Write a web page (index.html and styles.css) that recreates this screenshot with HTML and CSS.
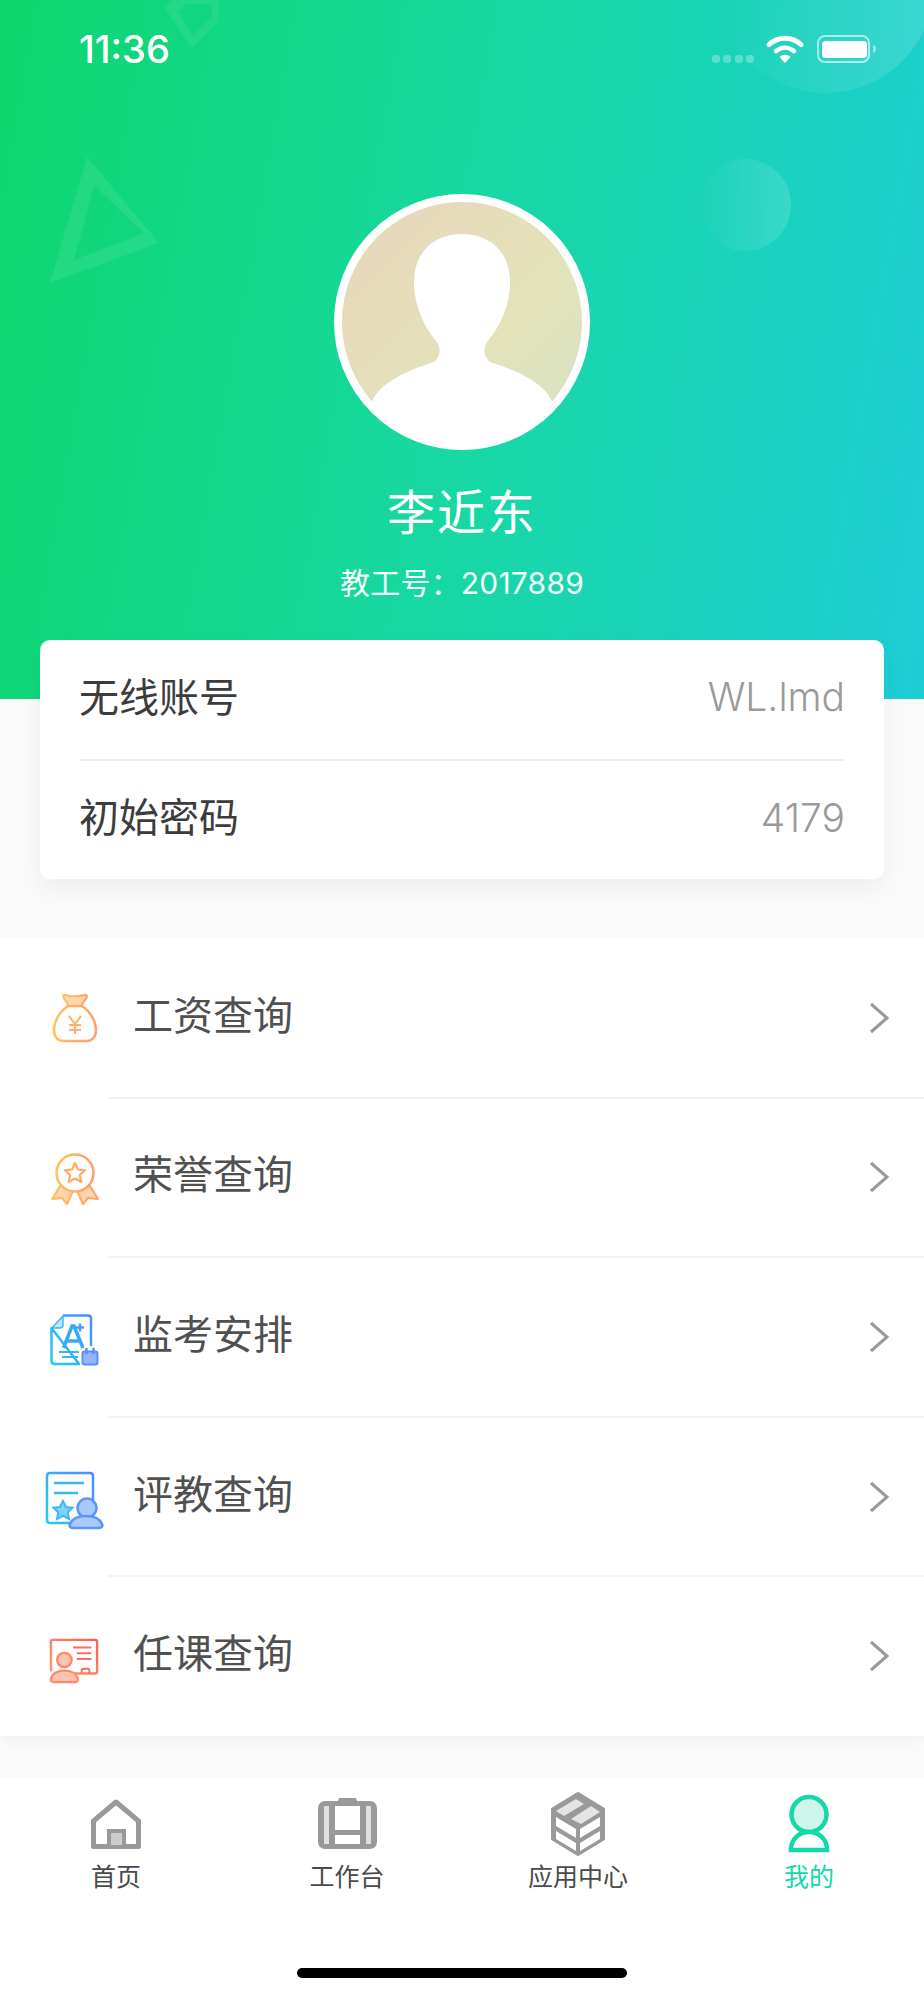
FILE: index.html
```html
<!DOCTYPE html>
<html lang="zh">
<head>
<meta charset="utf-8">
<title>我的</title>
<link rel="stylesheet" href="styles.css">
</head>
<body>
<svg class="defs" width="0" height="0" aria-hidden="true">
  <defs>
    <linearGradient id="org" x1="0" y1="0" x2="1" y2="0"><stop offset="0" stop-color="#ffc062"/><stop offset="1" stop-color="#ff9f6a"/></linearGradient>
    <linearGradient id="blu" x1="0" y1="1" x2="1" y2="0"><stop offset="0" stop-color="#22cdf0"/><stop offset="1" stop-color="#4e8cff"/></linearGradient>
    <linearGradient id="red" x1="0" y1="1" x2="1" y2="0"><stop offset="0" stop-color="#ffa061"/><stop offset="1" stop-color="#ff5a62"/></linearGradient>
    <linearGradient id="ava" x1="0" y1="0" x2="1" y2="1"><stop offset="0" stop-color="#e8d4bb"/><stop offset=".6" stop-color="#e3e3ba"/><stop offset="1" stop-color="#d5e2c4"/></linearGradient>
    <linearGradient id="fade" x1="0" y1="0" x2="1" y2="0"><stop offset="0" stop-color="#fff" stop-opacity="0"/><stop offset="1" stop-color="#fff" stop-opacity=".14"/></linearGradient>
  </defs>
</svg>
<div class="page">
  <header class="hero">
    <svg class="deco" viewBox="0 0 924 699" aria-hidden="true">
      <path fill-rule="evenodd" d="M165 8 172 0H218V22L192 48ZM178 12 193 36 212 17V4H185Z" fill="#fff" fill-opacity=".07"/>
      <path fill-rule="evenodd" d="M87 157 159 243 50 283ZM94 185 74 260 144 233Z" fill="#fff" fill-opacity=".08"/>
      <circle cx="745" cy="205" r="46" fill="url(#fade)"/>
      <circle cx="826" cy="-15" r="108" fill="url(#fade)"/>
    </svg>
    <div class="status">
      <span class="time">11:36</span>
      <div class="status-icons">
        <span class="signal"><i></i><i></i><i></i><i></i></span>
        <svg class="wifi" viewBox="0 0 38 28" aria-hidden="true">
          <path d="M3 9.500C12 1 26 1 35 9.500" fill="none" stroke="#fff" stroke-width="5" stroke-linecap="round"/>
          <path d="M10 16c5.500-4.500 12.500-4.500 18 0" fill="none" stroke="#fff" stroke-width="4.500" stroke-linecap="round"/>
          <path d="M19 28l-5.500-6c3-3 8-3 11 0z" fill="#fff"/>
        </svg>
        <svg class="battery" viewBox="0 0 60 28" aria-hidden="true">
          <rect x="1" y="1" width="51" height="26" rx="7" fill="none" stroke="#fff" stroke-opacity=".6" stroke-width="2"/>
          <rect x="5" y="6" width="45" height="17" rx="3.500" fill="#fff"/>
          <path d="M56 10c2 .5 3 2 3 4s-1 3.500-3 4z" fill="#fff" fill-opacity=".5"/>
        </svg>
      </div>
    </div>
    <div class="profile">
      <svg class="avatar" viewBox="0 0 256 256" aria-hidden="true">
        <circle cx="128" cy="128" r="124" fill="url(#ava)" stroke="#fff" stroke-width="8"/>
        <path d="M128 40C158 40 176 60 176 88 176 118 160 140 153 148 149 154 149 163 156 168 182 176 212 190 218 208A120 120 0 0 1 38 208C44 190 74 176 100 168 107 163 107 154 103 148 96 140 80 118 80 88 80 60 98 40 128 40Z" fill="#fff"/>
      </svg>
      <div class="name">李近东</div>
      <div class="staff-no">教工号：2017889</div>
    </div>
  </header>

  <section class="card">
    <div class="card-row"><span class="card-text">无线账号</span><span class="card-value">WL.lmd</span></div>
    <div class="card-row"><span class="card-text">初始密码</span><span class="card-value">4179</span></div>
  </section>

  <ul class="menu">
    <li class="menu-row">
      <span class="menu-icon">
        <svg class="mi mi-bag" viewBox="0 0 48 52" aria-hidden="true">
          <path d="M14 3c4 1 6 2 10 1 4 1 7-1 10-1 3 0 2 2 0 5-2 2-3 4-3 6H17c0-2-1-4-3-6-2-3-3-5 0-5z" fill="#ffd8ae" stroke="url(#org)" stroke-width="2"/>
          <path d="M17 14C8 20 3 30 3 38c0 7 4 11 10 11h22c6 0 10-4 10-11 0-8-5-18-14-24z" fill="none" stroke="url(#org)" stroke-width="2.500"/>
          <path d="M18 24l6 8 6-8M24 32v10M18 33h12M18 38h12" fill="none" stroke="#ffb066" stroke-width="2"/>
        </svg>
      </span>
      <span class="menu-label">工资查询</span>
      <svg class="chev" viewBox="0 0 22 32" aria-hidden="true"><path d="M3 2l16 14L3 30" fill="none" stroke="#999" stroke-width="3"/></svg>
    </li>
    <li class="menu-row">
      <span class="menu-icon">
        <svg class="mi mi-rosette" viewBox="0 0 48 52" aria-hidden="true">
          <path d="M9 33L1 46l10-1 5 6 6-13zM39 33l8 13-10-1-5 6-6-13z" fill="#ffd3ad" stroke="url(#org)" stroke-width="2" stroke-linejoin="round"/>
          <circle cx="24" cy="20" r="18.500" fill="#fff" stroke="url(#org)" stroke-width="2.500"/>
          <path d="M24 10l3 6.500 7 .8-5.200 4.700 1.500 7L24 25.500 17.700 29l1.500-7-5.200-4.700 7-.8z" fill="none" stroke="#ffab66" stroke-width="2.200" stroke-linejoin="round"/>
        </svg>
      </span>
      <span class="menu-label">荣誉查询</span>
      <svg class="chev" viewBox="0 0 22 32" aria-hidden="true"><path d="M3 2l16 14L3 30" fill="none" stroke="#999" stroke-width="3"/></svg>
    </li>
    <li class="menu-row">
      <span class="menu-icon">
        <svg class="mi mi-doc" viewBox="0 0 48 52" aria-hidden="true">
          <path d="M13 2.500H38c2 0 3 1 3 3V33M29 51H5c-2 0-3.500-1-3.500-3V15Z" fill="none" stroke="url(#blu)" stroke-width="2.500" stroke-linejoin="round"/>
          <path d="M13 3v9c0 2-1 3-3 3H2z" fill="#bde9f8" stroke="#3db8f2" stroke-width="1.500"/>
          <path d="M13.500 35L22 13h2L33 35M16.500 28h14" fill="none" stroke="#3ba8f5" stroke-width="3.500"/>
          <path d="M26 14.500h8M30 10.500v8" stroke="#4aa0f8" stroke-width="2.500"/>
          <path d="M9 39h20M12 44h16" stroke="#37b4f3" stroke-width="2"/>
          <rect x="32.500" y="38.500" width="15" height="13" rx="2" fill="#93b6fb" stroke="#5b8ff9" stroke-width="2"/>
          <path d="M36.500 35v6M43.500 35v6" stroke="#5b8ff9" stroke-width="2.500"/>
        </svg>
      </span>
      <span class="menu-label">监考安排</span>
      <svg class="chev" viewBox="0 0 22 32" aria-hidden="true"><path d="M3 2l16 14L3 30" fill="none" stroke="#999" stroke-width="3"/></svg>
    </li>
    <li class="menu-row">
      <span class="menu-icon">
        <svg class="mi mi-wide" viewBox="0 0 56 58" aria-hidden="true">
          <path d="M24 51H4c-2 0-3-1-3-3V4c0-2 1-3 3-3h40c2 0 3 1 3 3v24" fill="none" stroke="url(#blu)" stroke-width="2.500"/>
          <path d="M8 11h30M8 21h24" stroke="#36b6f2" stroke-width="2.500"/>
          <path d="M17 29l3 6 6.500.8-4.700 4.500 1.200 6.700-6-3.200-6 3.200 1.200-6.700-4.700-4.500 6.500-.8z" fill="#7fd3f8" stroke="#3fb6f3" stroke-width="2"/>
          <circle cx="41" cy="36" r="9.500" fill="#a9c8fc" stroke="#5b95f8" stroke-width="2.500"/>
          <path d="M28 56c-3 0-4-2-3-4 2-5 8-8 16-8s14 3 16 8c1 2 0 4-3 4z" transform="translate(-1 0)" fill="#a9c8fc" stroke="#5b95f8" stroke-width="2.500"/>
        </svg>
      </span>
      <span class="menu-label">评教查询</span>
      <svg class="chev" viewBox="0 0 22 32" aria-hidden="true"><path d="M3 2l16 14L3 30" fill="none" stroke="#999" stroke-width="3"/></svg>
    </li>
    <li class="menu-row">
      <span class="menu-icon">
        <svg class="mi mi-slide" viewBox="0 0 52 46" aria-hidden="true">
          <path d="M2 34V3c0-1 .6-2 2-2h44c1.400 0 2 1 2 2v31c0 1-.6 2-2 2H20" fill="none" stroke="url(#red)" stroke-width="2.500"/>
          <path d="M25 9h19M29 15h15M29 21h15" stroke="#ff6a66" stroke-width="2"/>
          <path d="M34 36v-3c0-1 1-2 2-2h4c1 0 2 1 2 2v3" fill="none" stroke="#ff6a66" stroke-width="2"/>
          <circle cx="16" cy="22" r="7.500" fill="#ffc2ac" stroke="#ff8a6c" stroke-width="2.500"/>
          <path d="M5 45c-2 0-3-1-3-3 1-6 7-9 14-9s13 3 14 9c0 2-1 3-3 3z" fill="#ffc2ac" stroke="#ff8a6c" stroke-width="2.500"/>
        </svg>
      </span>
      <span class="menu-label">任课查询</span>
      <svg class="chev" viewBox="0 0 22 32" aria-hidden="true"><path d="M3 2l16 14L3 30" fill="none" stroke="#999" stroke-width="3"/></svg>
    </li>
  </ul>

  <nav class="tabbar">
    <div class="tab">
      <span class="tab-icon">
        <svg class="ti-home" viewBox="0 0 50 50" aria-hidden="true">
          <path d="M25 3L2.500 22V47.500H47.500V22Z" fill="none" stroke="#999" stroke-width="5" stroke-linejoin="round"/>
          <rect x="18" y="32" width="15" height="16" fill="#ccc" stroke="#999" stroke-width="4"/>
        </svg>
      </span>
      <span class="tab-label">首页</span>
    </div>
    <div class="tab">
      <span class="tab-icon">
        <svg class="ti-work" viewBox="0 0 59 51" aria-hidden="true">
          <path d="M20 3l1-3h17l1 3z" fill="#999"/>
          <rect x="0" y="3" width="59" height="48" rx="7" fill="#999"/>
          <path d="M6 8h5v38H6zM48 8h5v38h-5z" fill="#e0e0e0"/>
          <path d="M17 8h25v24H17zM17 37h25v9H17z" fill="#fff"/>
        </svg>
      </span>
      <span class="tab-label">工作台</span>
    </div>
    <div class="tab">
      <span class="tab-icon">
        <svg class="ti-box" viewBox="0 0 54 64" aria-hidden="true">
          <path d="M27 1.500L52.500 17V47L27 62.500 1.500 47V17Z" fill="#999" stroke="#999" stroke-width="3" stroke-linejoin="round"/>
          <path d="M5 19L25 7 33 12 13 24ZM20 27L40 14 49 20 30 32Z" fill="#e4e4e4"/>
          <path d="M5 25L25 37V46L5 34ZM5 39L25 51V59L5 47ZM49 25L29 37V46L49 34ZM49 39L29 51V59L49 47Z" fill="#fff"/>
        </svg>
      </span>
      <span class="tab-label">应用中心</span>
    </div>
    <div class="tab tab-active">
      <span class="tab-icon">
        <svg class="ti-me" viewBox="0 0 40 57" aria-hidden="true">
          <circle cx="20" cy="19.500" r="17.500" fill="#cff4ea" stroke="#14d8a8" stroke-width="4.500"/>
          <path d="M2 55c0-11 8-18 18-18s18 7 18 18z" fill="#fff" stroke="#14d8a8" stroke-width="4.500"/>
        </svg>
      </span>
      <span class="tab-label">我的</span>
    </div>
  </nav>
  <div class="home-indicator"></div>
</div>
</body>
</html>
```

FILE: styles.css
```css
* { box-sizing: border-box; }
html, body { margin: 0; padding: 0; }
body {
  width: 924px;
  height: 2000px;
  overflow: hidden;
  background: #fafafa;
  font-family: "Inter", "Noto Sans CJK SC", "Noto Sans", sans-serif;
}
.defs { position: absolute; }
.page { width: 924px; height: 2000px; display: flex; flex-direction: column; }

.hero {
  position: relative;
  height: 699px;
  flex: none;
  background: linear-gradient(100deg, #0ed66c 0%, #17d8a2 50%, #1dcdd6 100%);
  overflow: hidden;
}
.deco { position: absolute; left: 0; top: 0; width: 924px; height: 699px; }
.status {
  position: relative;
  height: 100px;
  padding: 29px 47px 0 79px;
  display: flex;
  justify-content: space-between;
  align-items: flex-start;
  color: #fff;
}
.time { font-size: 38px; font-weight: 500; line-height: 40px; }
.status-icons { display: flex; align-items: flex-start; gap: 13px; padding-top: 6px; }
.signal { display: flex; gap: 3.300px; margin-top: 20px; margin-right: -1px; }
.signal i { width: 8px; height: 8px; border-radius: 3px; background: rgba(255,255,255,.28); display: block; }
.wifi { width: 38px; height: 28px; }
.battery { width: 60px; height: 28px; }

.profile { position: relative; display: flex; flex-direction: column; align-items: center; padding-top: 94px; color: #fff; }
.avatar { width: 256px; height: 256px; display: block; }
.name { margin-top: 31px; font-size: 48px; line-height: 64px; letter-spacing: 2px; }
.staff-no { margin-top: 18px; font-size: 30px; line-height: 40px; letter-spacing: .2px; opacity: .95; }

.card {
  position: relative;
  margin: -59px 40px 0;
  height: 239px;
  background: #fff;
  border-radius: 10px;
  padding: 0 39px;
  box-shadow: 0 10px 24px rgba(0,0,0,.05);
  display: flex;
  flex-direction: column;
  flex: none;
}
.card-row {
  flex: 1;
  display: flex;
  justify-content: space-between;
  align-items: center;
  font-size: 40px;
  color: #3c3c3c;
}
.card-row + .card-row { border-top: 2px solid #eeeeee; }
.card-text { padding-bottom: 9px; }
.card-value { padding-bottom: 5px; color: #9a9a9a; font-size: 39px; font-weight: 300; }

.menu {
  list-style: none;
  margin: 59px 0 0;
  padding: 0;
  background: #fff;
  box-shadow: 0 4px 12px rgba(0,0,0,.04);
  flex: none;
}
.menu-row {
  height: 159.600px;
  display: flex;
  align-items: center;
  position: relative;
  font-size: 40px;
  color: #505050;
}
.menu-row + .menu-row::before {
  content: "";
  position: absolute;
  left: 108px;
  right: 0;
  top: -1px;
  height: 2px;
  background: #f2f2f2;
}
.menu-icon { width: 96px; margin-left: 26px; margin-right: 11px; flex: none; display: flex; justify-content: center; }
.mi { width: 48px; height: 52px; display: block; overflow: visible; flex: none; }
.mi-bag { margin-left: 2px; }
.mi-rosette { margin-top: 4px; margin-left: 2px; }
.mi-doc { margin-top: 4px; }
.mi-wide { width: 56px; height: 58px; margin-top: 8px; }
.mi-slide { width: 50px; height: 46px; margin-top: 9px; }
.menu-label { flex: 1; padding-bottom: 10px; }
.chev { width: 22px; height: 32px; margin-right: 34px; }

.tabbar {
  margin-top: 41px;
  flex: 1;
  background: #fff;
  display: grid;
  grid-template-columns: 232px 230px 232px 230px;
  align-items: start;
  padding-top: 15px;
}
.tab { display: flex; flex-direction: column; align-items: center; font-size: 25px; color: #4a4a4a; }
.tab-icon { height: 64px; display: flex; align-items: center; justify-content: center; }
.tab-icon svg { display: block; overflow: visible; }
.ti-home { width: 50px; height: 50px; }
.ti-work { width: 59px; height: 51px; }
.ti-box { width: 54px; height: 64px; }
.ti-me { width: 40px; height: 57px; }
.tab-label { margin-top: 3px; line-height: 36px; }
.tab-active { color: #14d8a8; }
.home-indicator {
  position: absolute;
  left: 297px;
  top: 1968px;
  width: 330px;
  height: 10px;
  border-radius: 5px;
  background: #000;
}
```
